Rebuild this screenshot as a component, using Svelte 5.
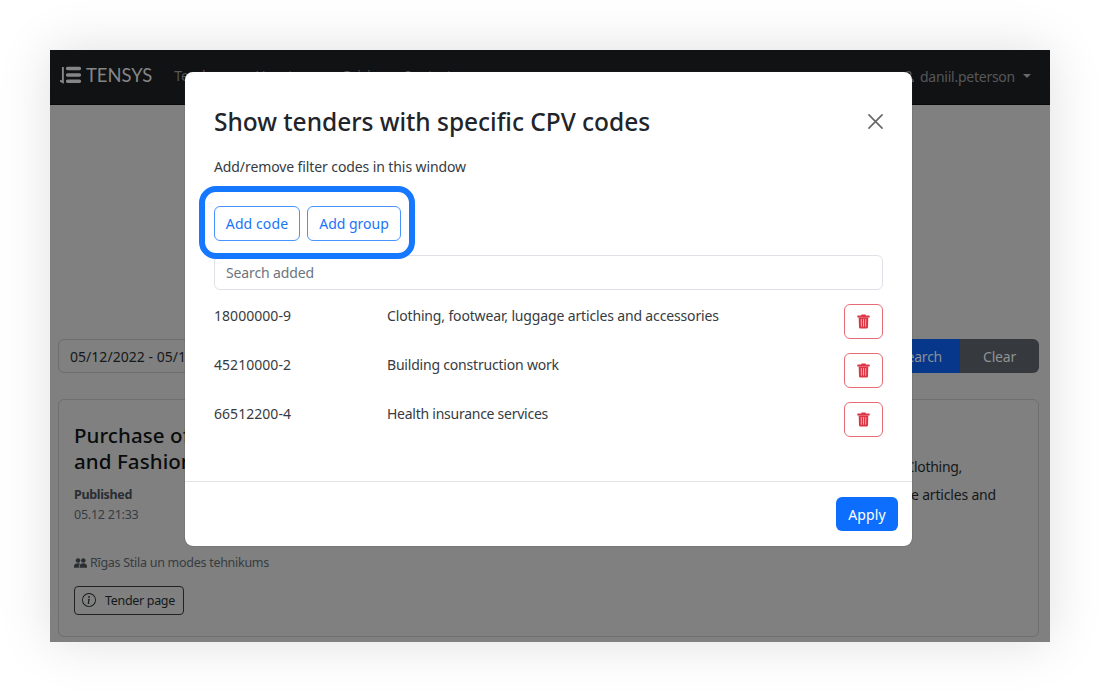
<script>
  const codes = [
    { code: '18000000-9', name: 'Clothing, footwear, luggage articles and accessories', tracking: -0.15 },
    { code: '45210000-2', name: 'Building construction work', tracking: -0.2 },
    { code: '66512200-4', name: 'Health insurance services', tracking: -0.256 }
  ];
</script>

<div class="stage">
  <div class="window">
    <nav>
      <svg class="logo" width="22" height="18" viewBox="0 0 22 18">
        <path d="M2.900 1v15.200L0 14.600" fill="none" stroke="#858687" stroke-width="1.900" />
        <path d="M7.600 2.400h11.800M7.600 8.900h11.800M7.600 15.300h11.800" stroke="#858687" stroke-width="3.500" stroke-linecap="round" />
      </svg>
      <span class="brand">TENSYS</span>
      <div class="links"><span>Tenders</span><span>How to use</span><span>Pricing</span><span>Contact</span></div>
      <div class="user">
        <span class="lang">En</span>
        <svg width="13" height="13" viewBox="0 0 16 16" fill="none" stroke="#56585a" stroke-width="1.4"><circle cx="8" cy="5" r="3" /><path d="M2 14c0-5 12-5 12 0z" /></svg>
        <span class="name">daniil.peterson</span>
        <i class="caret"></i>
      </div>
    </nav>
    <main>
      <div class="filters">
        <div class="date">05/12/2022 - 05/1</div>
        <div class="search">Search</div>
        <div class="clear">Clear</div>
      </div>
      <section>
        <div class="tender">
          <h2>Purchase of<br />and Fashion</h2>
          <b>Published</b>
          <span class="when">05.12 21:33</span>
          <div class="buyer">
            <svg width="13" height="10" viewBox="0 0 13 10" fill="#2b2f33"><circle cx="4" cy="2.500" r="2.300" /><circle cx="9.300" cy="2.500" r="2.300" /><path d="M0 9.800V8.200C0 6.200 1.800 5.300 4 5.300c.8 0 1.500.1 2.100.4C5.200 6.500 4.900 7.300 4.900 8.300v1.500zM5.600 9.800V8.300c0-2 1.500-3 3.700-3S13 6.300 13 8.300v1.500z" /></svg>
            <span>Rīgas Stila un modes tehnikums</span>
          </div>
          <div class="page">
            <svg width="14" height="14" viewBox="0 0 16 16" fill="#15181a"><path d="M8 15A7 7 0 1 1 8 1a7 7 0 0 1 0 14m0 1A8 8 0 1 0 8 0a8 8 0 0 0 0 16" /><path d="m8.930 6.588-2.290.287-.082.380.450.083c.294.070.352.176.288.469l-.738 3.468c-.194.897.105 1.319.808 1.319.545 0 1.178-.252 1.465-.598l.088-.416c-.200.176-.492.246-.686.246-.275 0-.375-.193-.304-.533zM9 4.500a1 1 0 1 1-2 0 1 1 0 0 1 2 0" /></svg>
            <span>Tender page</span>
          </div>
        </div>
        <div class="tags"><span class="t1">Clothing,</span><span class="t2">luggage articles and</span></div>
      </section>
    </main>
  </div>

  <div class="modal">
    <div class="body">
      <header>
        <h1>Show tenders with specific CPV codes</h1>
        <svg width="15" height="15" viewBox="0 0 16 16"><path d="M1 1l14 14M15 1L1 15" stroke="#666" stroke-width="1.700" stroke-linecap="round" /></svg>
      </header>
      <p>Add/remove filter codes in this window</p>
      <div class="adds">
        <button class="add code-btn">Add code</button>
        <button class="add group-btn">Add group</button>
        <div class="highlight"></div>
      </div>
      <div class="field">Search added</div>
      <div class="rows">
        {#each codes as row}
          <div class="row">
            <span class="code">{row.code}</span>
            <span class="label" style:letter-spacing="{row.tracking}px">{row.name}</span>
            <button class="del" aria-label="Remove">
              <svg width="13" height="15" viewBox="0 0 13 15"><path d="M4.300 1.400V.4h4.400v1h3.500a.5.500 0 0 1 .500.500v1.600H.3V1.900a.5.500 0 0 1 .500-.500z" fill="#dc3545" /><path d="M1.700 3.500h9.600l-.3 9.700a1.300 1.300 0 0 1-1.300 1.200H3.300A1.300 1.300 0 0 1 2 13.200z" fill="#dc3545" /><path d="M4.300 5l.1 7.600M6.500 5v7.600M8.700 5l-.1 7.600" stroke="#fff" stroke-width=".8" opacity=".75" /></svg>
            </button>
          </div>
        {/each}
      </div>
    </div>
    <footer><button class="apply">Apply</button></footer>
  </div>
</div>

<style>
  :global(body) { margin: 0; background: #fff; }
  * { box-sizing: border-box; }
  .stage { position: relative; width: 1100px; height: 692px; padding: 50px; overflow: hidden; font: 14px/20px "Noto Sans", sans-serif; color: #212529; white-space: nowrap; }
  .window { width: 1000px; height: 592px; background: #808080; box-shadow: 0 0 50px rgba(0, 0, 0, .13); }
  nav { height: 55px; background: #111214; border-bottom: 1px solid #08090a; display: flex; align-items: center; padding: 0 19px 4px 10px; }
  .logo { display: block; }
  .brand { margin-left: 4px; font: 400 18.400px/22px Lato, sans-serif; letter-spacing: 0; color: #858687; }
  .links { display: flex; margin-left: 22px; padding-top: 2px; color: #56585a; letter-spacing: -.2px; }
  .links span:nth-child(1) { width: 81px; }
  .links span:nth-child(2) { width: 88px; }
  .links span:nth-child(3) { width: 59px; }
  .user { margin-left: auto; display: flex; align-items: center; padding-top: 3px; color: #56585a; }
  .lang { margin-right: 26px; }
  .name { margin-left: 5px; letter-spacing: -.252px; }
  .caret { margin: 0 0 1px 8px; border: 4px solid transparent; border-top-color: #68696b; border-bottom: 0; }
  main { padding: 234px 11px 0 8px; }
  .filters { display: flex; height: 34px; line-height: 33px; }
  .date { flex: 1; border: 1px solid #6b6d70; border-radius: 6px; padding-left: 11px; color: #15181a; letter-spacing: .03px; }
  .search { width: 80px; background: #07378a; color: #8c9096; text-align: right; padding-right: 18px; letter-spacing: -.25px; }
  .clear { width: 79px; background: #363a3e; color: #909294; text-align: center; border-radius: 0 6px 6px 0; letter-spacing: -.2px; }
  .search, .clear { padding-top: 1px; }
  section { display: flex; justify-content: space-between; height: 238px; margin-top: 26px; padding: 22px 0 0 15px; border: 1px solid #6e6f71; border-radius: 6px; }
  .tender { display: flex; flex-direction: column; align-items: flex-start; }
  h2 { margin: 0 0 14px; font-size: 20.500px; font-weight: 500; line-height: 26px; letter-spacing: .08px; color: #090b0c; }
  b { font-size: 12.500px; line-height: 18px; letter-spacing: -.335px; color: #292e32; margin-top: -2px; }
  .when { font-size: 12.500px; line-height: 20px; letter-spacing: -.241px; color: #363c41; margin-top: 1px; }
  .buyer { display: flex; align-items: center; gap: 3px; margin-top: 28px; font-size: 12.500px; letter-spacing: -.276px; color: #363c41; }
  .page { display: flex; align-items: center; width: 110px; height: 29px; margin-top: 13px; padding-left: 7px; gap: 9px; border: 1px solid #202326; border-radius: 4px; font-size: 12.500px; letter-spacing: -.314px; color: #15181a; }
  .page svg { margin-top: -2px; }
  .tags { width: 147px; padding-top: 31px; line-height: 28px; display: flex; flex-direction: column; color: #15181a; }
  .t1 { width: 71px; align-self: flex-start; text-align: right; letter-spacing: -.300px; }
  .t2 { width: 105px; direction: rtl; letter-spacing: -.181px; }
  .modal { position: absolute; left: 185px; top: 72px; width: 727px; height: 474px; background: #fff; border-radius: 8px; box-shadow: 0 0 1px #333; display: flex; flex-direction: column; }
  .body { flex: 1; padding: 33px 29px 0; }
  header { display: flex; justify-content: space-between; align-items: center; height: 34px; }
  h1 { margin: 0; font-size: 24.500px; font-weight: 500; line-height: 34px; letter-spacing: -.036px; }
  header svg { margin-top: -1px; }
  p { margin: 18px 0 0; line-height: 20px; letter-spacing: -.1px; color: #373b3f; }
  .adds { position: relative; display: flex; gap: 7px; margin-top: 29px; }
  button { font: 14px/20px "Noto Sans", sans-serif; padding: 0; background: #fff; border-radius: 6px; }
  .add { height: 35px; border: 1px solid #4993ff; color: #1a74fa; }
  .code-btn { width: 86px; letter-spacing: .1px; }
  .group-btn { width: 94px; letter-spacing: -.02px; }
  .highlight { position: absolute; left: -15px; top: -20px; width: 216px; height: 73px; border: 6.500px solid #1677ff; border-radius: 17px; }
  .field { height: 35px; margin-top: 14px; border: 1px solid #dee2e6; border-radius: 6px; line-height: 34px; padding-left: 11px; color: #6c757d; letter-spacing: -.128px; }
  .rows { padding-top: 14px; }
  .row { display: flex; height: 49.200px; color: #373b3f; }
  .row span { line-height: 24px; }
  .code { width: 173px; letter-spacing: .04px; }
  .label { flex: 1; }
  .del { width: 39px; height: 35px; border: 1px solid #e56b77; display: flex; align-items: center; justify-content: center; }
  footer { height: 65px; border-top: 1px solid #e3e4e6; padding: 15px 14px 0; display: flex; justify-content: flex-end; align-items: flex-start; }
  .apply { width: 62px; height: 34px; border: 0; background: #0d6efd; color: #fff; letter-spacing: .1px; padding-top: 1px; }
</style>
